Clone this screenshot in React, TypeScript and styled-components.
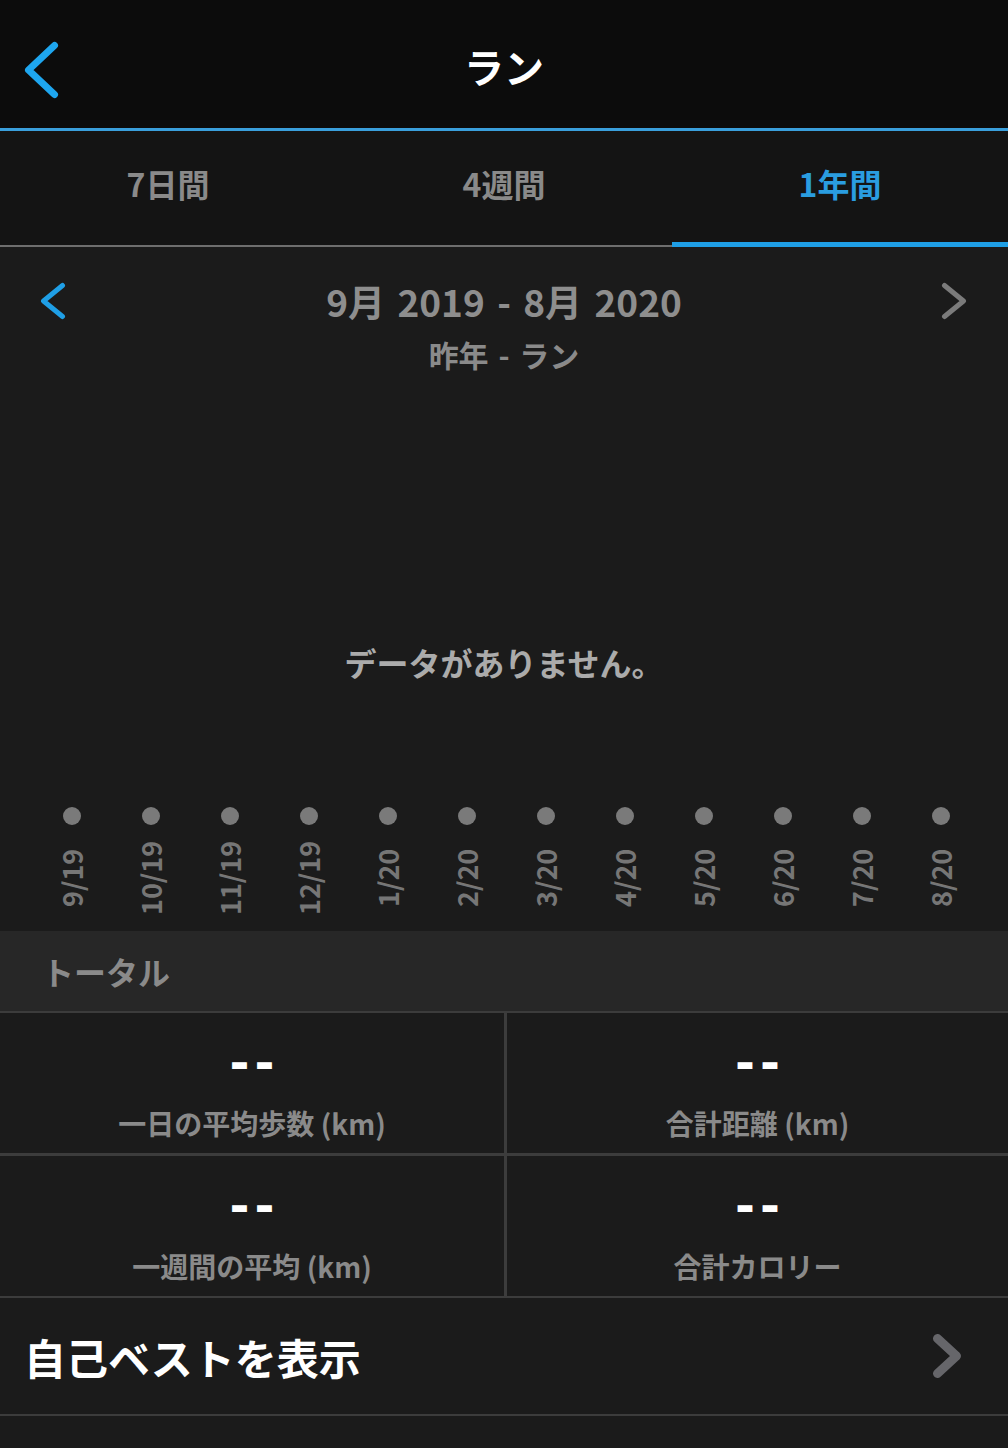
import styled, { createGlobalStyle } from 'styled-components';

const GlobalStyle = createGlobalStyle`
  html, body {
    margin: 0;
    padding: 0;
    background: #1b1b1b;
  }
  body {
    font-family: 'Noto Sans CJK JP', 'Noto Sans', sans-serif;
    -webkit-font-smoothing: antialiased;
  }
`;

const BLUE = '#1f9fe6';

const Page = styled.div`
  width: 1008px;
  min-height: 1448px;
  background: #1b1b1b;
  display: flex;
  flex-direction: column;
`;

// header
const Header = styled.header`
  height: 128px;
  background: #0c0c0c;
  border-bottom: 3px solid #3a9fdc;
  display: grid;
  grid-template-columns: 120px 1fr 120px;
  align-items: center;
`;

const BackButton = styled.div`
  display: flex;
  align-items: center;
  box-sizing: border-box;
  padding: 12px 0 0 24px;
  height: 100%;
`;

const Title = styled.h1`
  margin: 0;
  padding-top: 4px;
  text-align: center;
  color: #ffffff;
  font-size: 40px;
  font-weight: 700;
  line-height: 1;
`;

// tabs
const Tabs = styled.nav`
  height: 114px;
  background: #141414;
  border-bottom: 2px solid #6e6e6e;
  display: grid;
  grid-template-columns: 1fr 1fr 1fr;
`;

const Tab = styled.div<{ $active?: boolean }>`
  display: flex;
  align-items: center;
  justify-content: center;
  color: ${(p) => (p.$active ? '#2a9de0' : '#8a8a8a')};
  font-size: 32px;
  font-weight: 700;
  margin-bottom: ${(p) => (p.$active ? '-2px' : '0')};
  border-bottom: ${(p) => (p.$active ? `5px solid ${BLUE}` : '0')};
  padding-bottom: ${(p) => (p.$active ? '7px' : '10px')};
`;

// chart
const Chart = styled.section`
  height: 684px;
  display: flex;
  flex-direction: column;
  padding-top: 28px;
  box-sizing: border-box;
`;

const RangeRow = styled.div`
  height: 52px;
  display: grid;
  grid-template-columns: 100px 1fr 100px;
  align-items: center;
`;

const RangeArrow = styled.div<{ $side: 'left' | 'right' }>`
  display: flex;
  justify-content: ${(p) => (p.$side === 'left' ? 'flex-start' : 'flex-end')};
  padding: ${(p) => (p.$side === 'left' ? '0 0 0 40px' : '0 41px 0 0')};
`;

const RangeText = styled.div`
  text-align: center;
  color: #8e8e8e;
  font-size: 37px;
  font-weight: 700;
  word-spacing: 4px;
  line-height: 1;
`;

const SubTitle = styled.div`
  margin-top: 7px;
  text-align: center;
  color: #8a8a8a;
  font-size: 30px;
  font-weight: 700;
  word-spacing: 3px;
  line-height: 40px;
`;

const Empty = styled.div`
  margin-top: 266px;
  text-align: center;
  color: #ababab;
  font-size: 32px;
  font-weight: 700;
  line-height: 44px;
`;

const Axis = styled.div`
  margin-top: 123px;
  padding: 0 28px 0 32px;
  display: grid;
  grid-template-columns: repeat(12, 1fr);
`;

const AxisItem = styled.div`
  display: flex;
  flex-direction: column;
  align-items: center;
`;

const Dot = styled.span`
  width: 18px;
  height: 18px;
  border-radius: 50%;
  background: #7a7a7a;
`;

const AxisLabel = styled.span`
  margin-top: 17px;
  height: 72px;
  display: flex;
  align-items: center;
  justify-content: center;
  writing-mode: vertical-rl;
  transform: rotate(180deg);
  color: #767676;
  font-size: 27px;
  font-weight: 700;
  line-height: 1;
`;

// totals
const SectionHead = styled.div`
  height: 80px;
  background: #272727;
  display: flex;
  align-items: center;
  padding-left: 42px;
  color: #8a8a8a;
  font-size: 32px;
  font-weight: 700;
`;

const StatsGrid = styled.div`
  display: grid;
  grid-template-columns: 504px 1fr;
  grid-auto-rows: 140px;
  gap: 3px;
  background: #3c3c3c;
  border-top: 2px solid #3c3c3c;
  border-bottom: 2px solid #3c3c3c;
`;

const Stat = styled.div`
  background: #1b1b1b;
  display: flex;
  flex-direction: column;
  align-items: center;
`;

const StatValue = styled.div`
  margin-top: 27px;
  padding-left: 5px;
  color: #ffffff;
  font-family: 'DejaVu Sans', sans-serif;
  font-size: 48px;
  font-weight: 700;
  letter-spacing: 5px;
  line-height: 44px;
`;

const StatLabel = styled.div`
  margin-top: 19px;
  color: #8a8a8a;
  font-size: 28px;
  font-weight: 700;
  line-height: 40px;
`;

// personal records link
const LinkRow = styled.div`
  height: 116px;
  display: flex;
  align-items: center;
  justify-content: space-between;
  padding: 0 46px 0 24px;
  border-bottom: 2px solid #3c3c3c;
  color: #ffffff;
  font-size: 42px;
  font-weight: 700;
`;

const Chevron = ({ dir, color, w, h, sw }: { dir: 'left' | 'right'; color: string; w: number; h: number; sw: number }) => {
  const pad = sw / 2 + 1;
  const d =
    dir === 'left'
      ? `M${w - pad} ${pad} L${pad} ${h / 2} L${w - pad} ${h - pad}`
      : `M${pad} ${pad} L${w - pad} ${h / 2} L${pad} ${h - pad}`;
  return (
    <svg width={w} height={h} viewBox={`0 0 ${w} ${h}`}>
      <path d={d} fill="none" stroke={color} strokeWidth={sw} strokeLinecap="round" strokeLinejoin="round" />
    </svg>
  );
};

const months = ['9/19', '10/19', '11/19', '12/19', '1/20', '2/20', '3/20', '4/20', '5/20', '6/20', '7/20', '8/20'];

const stats = [
  { label: '一日の平均歩数 (km)' },
  { label: '合計距離 (km)' },
  { label: '一週間の平均 (km)' },
  { label: '合計カロリー' },
];

export default function App() {
  return (
    <Page>
      <GlobalStyle />
      <Header>
        <BackButton>
          <Chevron dir="left" color="#1ea6ef" w={35} h={58} sw={7} />
        </BackButton>
        <Title>ラン</Title>
        <div />
      </Header>

      <Tabs>
        <Tab>7日間</Tab>
        <Tab>4週間</Tab>
        <Tab $active>1年間</Tab>
      </Tabs>

      <Chart>
        <RangeRow>
          <RangeArrow $side="left">
            <Chevron dir="left" color={BLUE} w={26} h={38} sw={5} />
          </RangeArrow>
          <RangeText>9月 2019 - 8月 2020</RangeText>
          <RangeArrow $side="right">
            <Chevron dir="right" color="#7b7b7b" w={26} h={38} sw={5} />
          </RangeArrow>
        </RangeRow>
        <SubTitle>昨年 - ラン</SubTitle>
        <Empty>データがありません。</Empty>
        <Axis>
          {months.map((m) => (
            <AxisItem key={m}>
              <Dot />
              <AxisLabel>{m}</AxisLabel>
            </AxisItem>
          ))}
        </Axis>
      </Chart>

      <SectionHead>トータル</SectionHead>
      <StatsGrid>
        {stats.map((s) => (
          <Stat key={s.label}>
            <StatValue>--</StatValue>
            <StatLabel>{s.label}</StatLabel>
          </Stat>
        ))}
      </StatsGrid>

      <LinkRow>
        <span>自己ベストを表示</span>
        <Chevron dir="right" color="#66666a" w={30} h={46} sw={9} />
      </LinkRow>
    </Page>
  );
}
